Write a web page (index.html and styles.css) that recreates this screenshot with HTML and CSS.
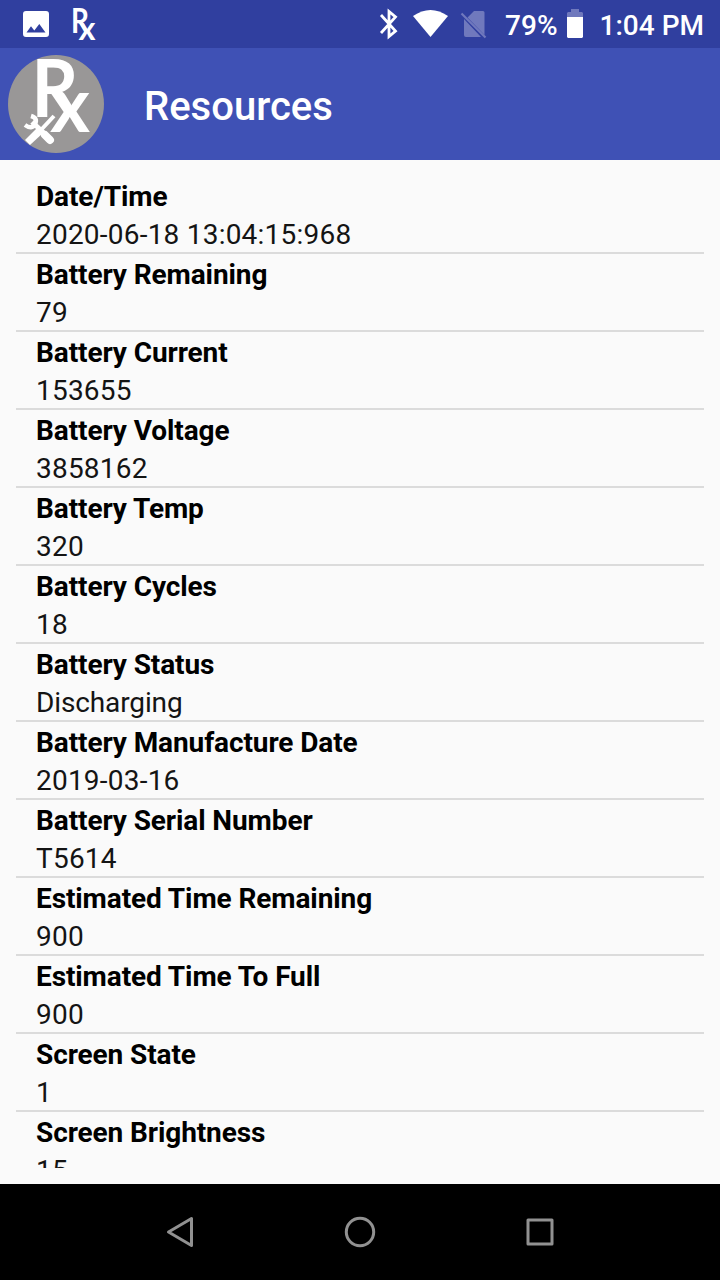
FILE: index.html
```html
<!DOCTYPE html>
<html lang="en">
<head>
<meta charset="utf-8">
<title>Resources</title>
<link rel="stylesheet" href="styles.css">
</head>
<body>
<div class="screen">
  <div class="status-bar">
    <svg class="status-notifications" width="100" height="48" viewBox="0 0 100 48">
      <path fill="#fff" fill-rule="evenodd" d="M26 11h20q3 0 3 3v20q0 3-3 3H26q-3 0-3-3V14q0-3 3-3zM26.500 32.500h19L39.300 24l-5 6.500-3.300-4.200z"/>
      <text class="rx" x="71" y="33" font-size="34" textLength="18" lengthAdjust="spacingAndGlyphs">R</text>
      <text class="rx" x="78.500" y="40" font-size="33" textLength="17" lengthAdjust="spacingAndGlyphs">x</text>
    </svg>
    <div class="status-system">
      <svg width="120" height="48" viewBox="375 0 120 48">
        <path fill="none" stroke="#fff" stroke-width="2.800" d="M381 15l14.500 16-6.500 5.500v-25l6.500 5.500-14.500 16"/>
        <path fill="#fff" d="M413 16q17.500-12 35 0L430.500 37z"/>
        <path fill="#7079bd" d="M474 11h9q1.500 0 1.500 1.500V35L467.500 17.500zM464 19l17 18H466q-2 0-2-2z"/>
        <path stroke="#7079bd" stroke-width="2.200" d="M461.500 13.500l24 24"/>
      </svg>
      <span class="battery-level">79%</span>
      <svg class="battery-icon" width="16" height="48" viewBox="0 0 16 48">
        <path fill="#7079bd" d="M4 9h8v3h3l1 1v5H0v-5l1-1h3z"/>
        <path fill="#fff" d="M0 17h16v20l-1 1H1l-1-1z"/>
      </svg>
      <span class="clock">1:04 PM</span>
    </div>
  </div>
  <div class="app-bar">
    <svg class="app-logo" width="96" height="98" viewBox="0 0 96 98">
      <ellipse cx="48" cy="49" rx="48" ry="49" fill="#999797"/>
      <text class="rx" x="23.500" y="62" font-size="81" textLength="47" lengthAdjust="spacingAndGlyphs">R</text>
      <text class="rx" x="42" y="77" font-size="77" textLength="40" lengthAdjust="spacingAndGlyphs">x</text>
      <path d="M27 70L43 85" stroke="#999797" stroke-width="9"/>
      <path d="M24 67l13 12" stroke="#fff" stroke-width="5"/>
      <path d="M23 61q7 2 4 8t-10 1" fill="none" stroke="#fff" stroke-width="4.500"/>
      <path d="M37 80l5 5" stroke="#fff" stroke-width="8" stroke-linecap="round"/>
      <path d="M46 61L32 76" stroke="#fff" stroke-width="4"/>
      <path d="M17 85L29 73l6 5-13 12z" fill="#fff"/>
    </svg>
    <h1 class="app-title">Resources</h1>
  </div>
  <main class="content">
    <dl class="list">
      <div class="row"><dt>Date/Time</dt><dd class="numeric">2020-06-18 13:04:15:968</dd></div>
      <div class="row"><dt>Battery Remaining</dt><dd class="numeric">79</dd></div>
      <div class="row"><dt>Battery Current</dt><dd class="numeric">153655</dd></div>
      <div class="row"><dt>Battery Voltage</dt><dd class="numeric">3858162</dd></div>
      <div class="row"><dt>Battery Temp</dt><dd class="numeric">320</dd></div>
      <div class="row"><dt>Battery Cycles</dt><dd class="numeric">18</dd></div>
      <div class="row"><dt>Battery Status</dt><dd>Discharging</dd></div>
      <div class="row"><dt>Battery Manufacture Date</dt><dd class="numeric">2019-03-16</dd></div>
      <div class="row"><dt>Battery Serial Number</dt><dd class="numeric">T5614</dd></div>
      <div class="row"><dt>Estimated Time Remaining</dt><dd class="numeric">900</dd></div>
      <div class="row"><dt>Estimated Time To Full</dt><dd class="numeric">900</dd></div>
      <div class="row"><dt>Screen State</dt><dd class="numeric">1</dd></div>
      <div class="row"><dt>Screen Brightness</dt><dd class="numeric">15</dd></div>
    </dl>
  </main>
  <nav class="nav-bar">
    <svg width="40" height="40" viewBox="0 0 40 40"><path d="M8.500 20L31.500 6.500v27z"/></svg>
    <svg width="40" height="40" viewBox="0 0 40 40"><circle cx="20" cy="20" r="13.700"/></svg>
    <svg width="40" height="40" viewBox="0 0 40 40"><rect x="8" y="8" width="24" height="24"/></svg>
  </nav>
</div>
</body>
</html>
```
FILE: styles.css
```css
* { box-sizing: border-box; }
body { margin: 0; font-family: Roboto, sans-serif; }
.screen {
  display: flex;
  flex-direction: column;
  width: 720px;
  height: 1280px;
  overflow: hidden;
  background: #fafafa;
}
.status-bar {
  display: flex;
  justify-content: space-between;
  height: 48px;
  padding-right: 16px;
  background: #303f9f;
  color: #fff;
  font-size: 28px;
  font-weight: 500;
  line-height: 52px;
}
.status-system { display: flex; }
.battery-level { margin-left: 10px; }
.battery-icon { margin: 0 17px 0 9px; }
.rx { font-family: Lato, sans-serif; font-weight: 700; fill: #fff; }
.app-bar {
  display: flex;
  align-items: center;
  height: 112px;
  padding-left: 8px;
  background: #3f51b5;
}
.app-title {
  margin: 4px 0 0 40px;
  color: #fff;
  font-size: 40px;
  font-weight: 500;
}
.content {
  flex: none;
  height: 1024px;
  padding: 16px;
}
.list {
  height: 992px;
  margin: 0;
  overflow: hidden;
  color: #000;
  font-size: 28px;
  line-height: 38px;
}
.row {
  height: 78px;
  padding: 2px 20px 0;
  border-bottom: 2px solid #dbdbdb;
}
.row dt { font-weight: 700; letter-spacing: -0.1px; }
.row dd { margin: 0; color: #141414; letter-spacing: -0.12px; }
.row .numeric { letter-spacing: 0.22px; }
.nav-bar {
  display: flex;
  justify-content: center;
  align-items: center;
  gap: 140px;
  height: 96px;
  background: #000;
}
.nav-bar svg {
  fill: none;
  stroke: #919191;
  stroke-width: 3;
  stroke-linejoin: round;
}
```
